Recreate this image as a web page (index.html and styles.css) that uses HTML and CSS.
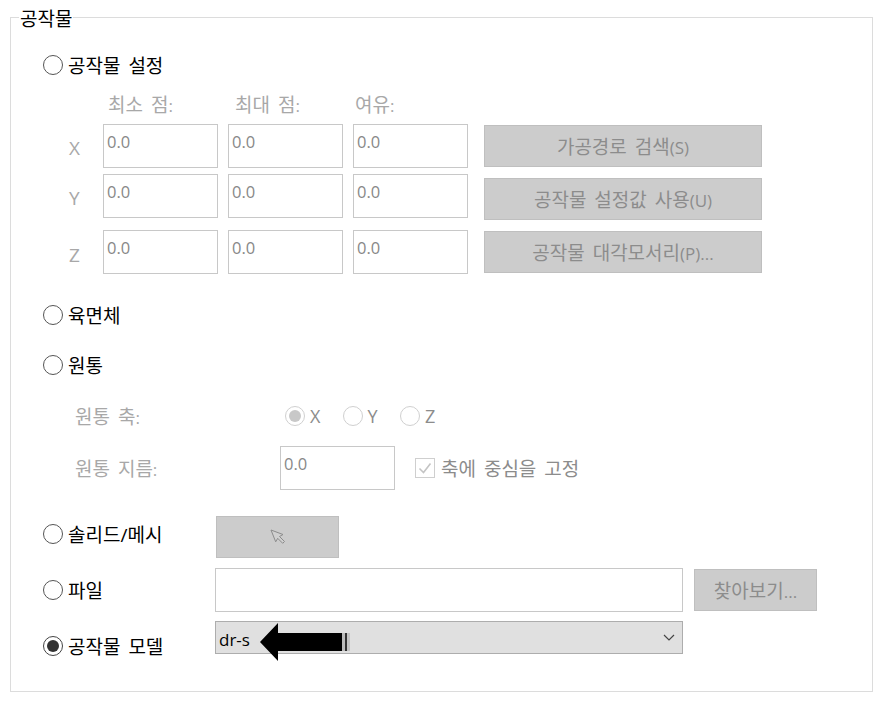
FILE: index.html
```html
<!DOCTYPE html>
<html lang="ko">
<head>
    <meta charset="UTF-8">
    <title>공작물</title>
    <link rel="stylesheet" href="styles.css">
</head>
<body>
    <div class="group">
        <span class="group-title">공작물</span>

        <div class="option first"><span class="radio"></span><span class="option-text">공작물 설정</span></div>

        <div class="bounds">
            <div class="bounds-grid">
                <span></span>
                <span class="head">최소 점<span class="lat">:</span></span>
                <span class="head mid">최대 점<span class="lat">:</span></span>
                <span class="head last">여유<span class="lat">:</span></span>

                <span class="axis">X</span>
                <input class="field" value="0.0" disabled>
                <input class="field" value="0.0" disabled>
                <input class="field" value="0.0" disabled>

                <span class="axis">Y</span>
                <input class="field" value="0.0" disabled>
                <input class="field" value="0.0" disabled>
                <input class="field" value="0.0" disabled>

                <span class="axis">Z</span>
                <input class="field" value="0.0" disabled>
                <input class="field" value="0.0" disabled>
                <input class="field" value="0.0" disabled>
            </div>
            <div class="bounds-buttons">
                <button class="btn wide" disabled>가공경로 검색<span class="lat">(S)</span></button>
                <button class="btn wide" disabled>공작물 설정값 사용<span class="lat">(U)</span></button>
                <button class="btn wide" disabled>공작물 대각모서리<span class="lat">(P)...</span></button>
            </div>
        </div>

        <div class="option box"><span class="radio"></span><span class="option-text">육면체</span></div>
        <div class="option cyl"><span class="radio"></span><span class="option-text">원통</span></div>

        <div class="cyl-axis">
            <span class="cyl-label">원통 축<span class="lat">:</span></span>
            <span class="radio small on"></span><span class="axis-name">X</span>
            <span class="radio small"></span><span class="axis-name">Y</span>
            <span class="radio small"></span><span class="axis-name">Z</span>
        </div>

        <div class="cyl-dia">
            <span class="cyl-label">원통 지름<span class="lat">:</span></span>
            <input class="field dia" value="0.0" disabled>
            <span class="check">
                <svg width="18" height="18" viewBox="0 0 18 18"><path d="M3.5 9.500l4 4 7-9" fill="none" stroke="#c4c4c4" stroke-width="1.600"/></svg>
            </span>
            <span class="check-label">축에 중심을 고정</span>
        </div>

        <div class="source solid">
            <div class="option"><span class="radio"></span><span class="option-text">솔리드/메시</span></div>
            <button class="btn pick" disabled>
                <svg width="16" height="16" viewBox="0 0 16 16"><path d="M1 1l12 4.500-3.500 2 5 5-1.800 1.800-5-5-2 3.500z" fill="#d0d0d0" stroke="#8c8c8c"/></svg>
            </button>
        </div>

        <div class="source file">
            <div class="option"><span class="radio"></span><span class="option-text">파일</span></div>
            <input class="field path" disabled>
            <button class="btn browse" disabled>찾아보기<span class="lat">...</span></button>
        </div>

        <div class="source model">
            <div class="option"><span class="radio on"></span><span class="option-text">공작물 모델</span></div>
            <div class="combo">
                <span class="combo-value">dr-s</span>
                <svg width="12" height="7" viewBox="0 0 12 7"><path d="M1 1l5 5 5-5" fill="none" stroke="#444" stroke-width="1.200"/></svg>
                <!-- arrow annotation on top of the combo -->
                <svg class="callout" width="90" height="38" viewBox="0 0 90 38"><path d="M0 19L18 0V10H82V28H18V38z" fill="#000"/><rect x="82" y="10" width="3" height="18" fill="#bbb"/><rect x="85" y="10" width="2" height="18" fill="#333"/><rect x="87" y="10" width="3" height="18" fill="#c4c4c4"/></svg>
            </div>
        </div>
    </div>
</body>
</html>
```

FILE: styles.css
```css
* { box-sizing: border-box; }
body {
    margin: 0;
    background-color: #ffffff;
    font-family: "Open Sans", "Noto Sans CJK KR", sans-serif;
    font-size: 19px;
    word-spacing: 3px;
    color: #000;
}
.lat { font-size: 17px; word-spacing: 0; }
.group {
    position: relative;
    width: 863px;
    height: 675px;
    margin: 17px 0 0 10px;
    padding: 35px 0 0 32px;
    border: 1px solid #dcdcdc;
}
.group-title {
    position: absolute;
    top: -11px;
    left: 8px;
    padding: 0 1px;
    line-height: 24px;
    background-color: #fff;
}
.option {
    display: flex;
    align-items: center;
    gap: 5px;
    height: 24px;
    line-height: 24px;
}
.option-text { padding-top: 2px; }
.radio {
    display: inline-block;
    flex: none;
    width: 20px;
    height: 20px;
    border: 1px solid #555;
    border-radius: 50%;
}
.radio.on { border-color: #444; padding: 3px; }
.radio.on::after {
    content: "";
    display: block;
    width: 12px;
    height: 12px;
    border-radius: 50%;
    background-color: #333;
}
.radio.small { border-color: #d0d0d0; }
.radio.small.on::after { background-color: #c8c8c8; }

.bounds {
    display: flex;
    margin: 17px 0 0 26px;
}
.bounds-grid {
    display: grid;
    grid-template-columns: 24px 115px 115px 115px;
    grid-template-rows: 24px 44px 44px 44px;
    column-gap: 10px;
    row-gap: 6px;
}
.bounds-grid .head { padding-left: 5px; color: #a8a8a8; line-height: 22px; }
.bounds-grid .head.mid { padding-left: 7px; }
.bounds-grid .head.last { padding-left: 2px; }
.bounds-grid .axis { color: #a8a8a8; font-size: 19px; line-height: 48px; }
.bounds-grid input:nth-child(n+13) { margin-top: 6px; }
.bounds-grid .axis:nth-child(n+13) { padding-top: 7px; }
.bounds-buttons {
    display: flex;
    flex-direction: column;
    gap: 11px;
    margin: 31px 0 0 16px;
}
.field {
    width: 115px;
    height: 44px;
    padding: 0 3px 10px 3px;
    border: 1px solid #c8c8c8;
    background-color: #fff;
    font: 16.500px "Open Sans", sans-serif;
    color: #888;
    -webkit-text-fill-color: #888;
    opacity: 1;
}
.btn {
    height: 42px;
    padding: 0;
    border: 1px solid #bfbfbf;
    background-color: #cccccc;
    font-family: inherit;
    font-size: 19px;
    word-spacing: 3px;
    color: #8c8c8c;
}
.btn.wide { width: 278px; }

.box { margin-top: 30px; }
.cyl { margin-top: 26px; }

.cyl-axis {
    display: flex;
    align-items: center;
    height: 24px;
    margin: 27px 0 0 32px;
    color: #a8a8a8;
}
.cyl-label { width: 210px; color: #a8a8a8; flex: none; }
.cyl-axis .radio { margin-right: 5px; }
.axis-name { width: 32.500px; font-size: 18px; color: #8c8c8c; }
.cyl-dia {
    display: flex;
    align-items: center;
    height: 44px;
    margin: 18px 0 0 32px;
}
.cyl-dia .cyl-label { width: 205px; }
.field.dia { margin-right: 20px; }
.check {
    display: flex;
    width: 20px;
    height: 20px;
    border: 1px solid #cfcfcf;
    margin-right: 6px;
}
.check-label { color: #8c8c8c; }

.source {
    display: flex;
    align-items: center;
}
.source .option { width: 172px; flex: none; }
.solid { height: 42px; margin-top: 26px; }
.solid .option { margin-bottom: 6px; }
.pick { width: 123px; margin-left: 1px; display: flex; align-items: center; justify-content: center; }
.file { height: 44px; margin-top: 10px; }
.path { width: 468px; }
.browse { width: 123px; margin-left: 11px; }
.model { margin-top: 9px; align-items: flex-start; }
.model .option { margin-top: 13px; }
.combo {
    position: relative;
    display: flex;
    align-items: center;
    justify-content: space-between;
    width: 468px;
    height: 33px;
    padding: 0 7px 0 3px;
    border: 1px solid #adadad;
    background-color: #e0e0e0;
    font-size: 17px;
}
.combo-value { padding-top: 3px; }
.callout {
    position: absolute;
    top: 1px;
    left: 44px;
}
```
